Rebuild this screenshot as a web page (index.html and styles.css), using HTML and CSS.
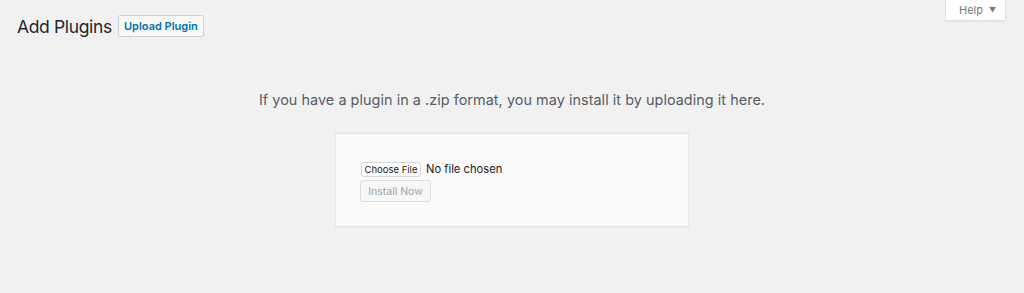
FILE: index.html
```html
<!DOCTYPE html>
<html>
<head>
<meta charset="utf-8">
<link rel="stylesheet" href="styles.css">
</head>
<body>
<div class="page">
  <div class="topbar">
    <div class="title-row">
      <h1 class="title">Add Plugins</h1>
      <span class="btn-upload">Upload Plugin</span>
    </div>
    <div class="help-tab">Help <span class="help-arrow">▼</span></div>
  </div>
  <p class="install-help">If you have a plugin in a .zip format, you may install it by uploading it here.</p>
  <div class="form-wrap">
    <div class="upload-form">
      <div class="file-row">
        <span class="choose-file">Choose File</span>
        <span class="no-file">No file chosen</span>
      </div>
      <span class="install-now">Install Now</span>
    </div>
  </div>
</div>
</body>
</html>
```
FILE: styles.css
```css
html, body {
  margin: 0;
  padding: 0;
  background: #f1f1f1;
  height: 293px;
  overflow: hidden;
  font-family: Inter, Roboto, "Noto Sans", sans-serif;
}
.page {
  display: flex;
  flex-direction: column;
}
.topbar {
  display: flex;
  justify-content: space-between;
  align-items: flex-start;
  padding: 0 18px 0 17px;
}
.title-row {
  display: flex;
  align-items: center;
  gap: 6px;
  padding-top: 15px;
}
.title {
  margin: 0;
  font-size: 17.5px;
  font-weight: 400;
  color: #23282d;
  line-height: 21px;
  letter-spacing: -0.35px;
  padding-top: 1px;
}
.btn-upload {
  display: inline-flex;
  align-items: center;
  justify-content: center;
  box-sizing: border-box;
  width: 86px;
  height: 22px;
  border: 1px solid #cfd2d4;
  background: #f7f7f7;
  border-radius: 2px;
  color: #0073aa;
  font-size: 11px;
  font-weight: 600;
}
.help-tab {
  box-sizing: border-box;
  width: 61px;
  height: 21px;
  background: #fff;
  border: 1px solid #e1e1e1;
  border-top: none;
  box-shadow: 0 1px 1px rgba(0,0,0,0.04);
  color: #72777c;
  font-size: 11px;
  display: flex;
  align-items: center;
  padding-left: 13px;
  gap: 6px;
}
.help-arrow {
  font-size: 7px;
  color: #72777c;
}
.install-help {
  margin: 0;
  padding-top: 54px;
  text-align: center;
  font-size: 14.4px;
  color: #555d66;
  line-height: 18px;
  letter-spacing: 0.05px;
}
.form-wrap {
  display: flex;
  justify-content: center;
  padding-top: 24px;
}
.upload-form {
  box-sizing: border-box;
  width: 354px;
  height: 94px;
  background: #fafafa;
  border: 1px solid #e6e6e6;
  padding: 28px 24px 0 24px;
  display: flex;
  flex-direction: column;
  align-items: flex-start;
  gap: 3px;
}
.file-row {
  display: flex;
  align-items: center;
  gap: 5px;
  margin-left: 1px;
}
.choose-file {
  box-sizing: border-box;
  width: 60px;
  height: 15px;
  display: inline-flex;
  align-items: center;
  justify-content: center;
  background: #fff;
  border: 1px solid #d6d6d6;
  border-radius: 3px;
  font-size: 9.5px;
  color: #222;
}
.no-file {
  font-size: 11.2px;
  color: #222;
  line-height: 15px;
}
.install-now {
  box-sizing: border-box;
  width: 71px;
  height: 22px;
  display: inline-flex;
  align-items: center;
  justify-content: center;
  background: #f7f7f7;
  border: 1px solid #dddddd;
  border-radius: 3px;
  color: #a0a5aa;
  font-size: 10.5px;
}
```
